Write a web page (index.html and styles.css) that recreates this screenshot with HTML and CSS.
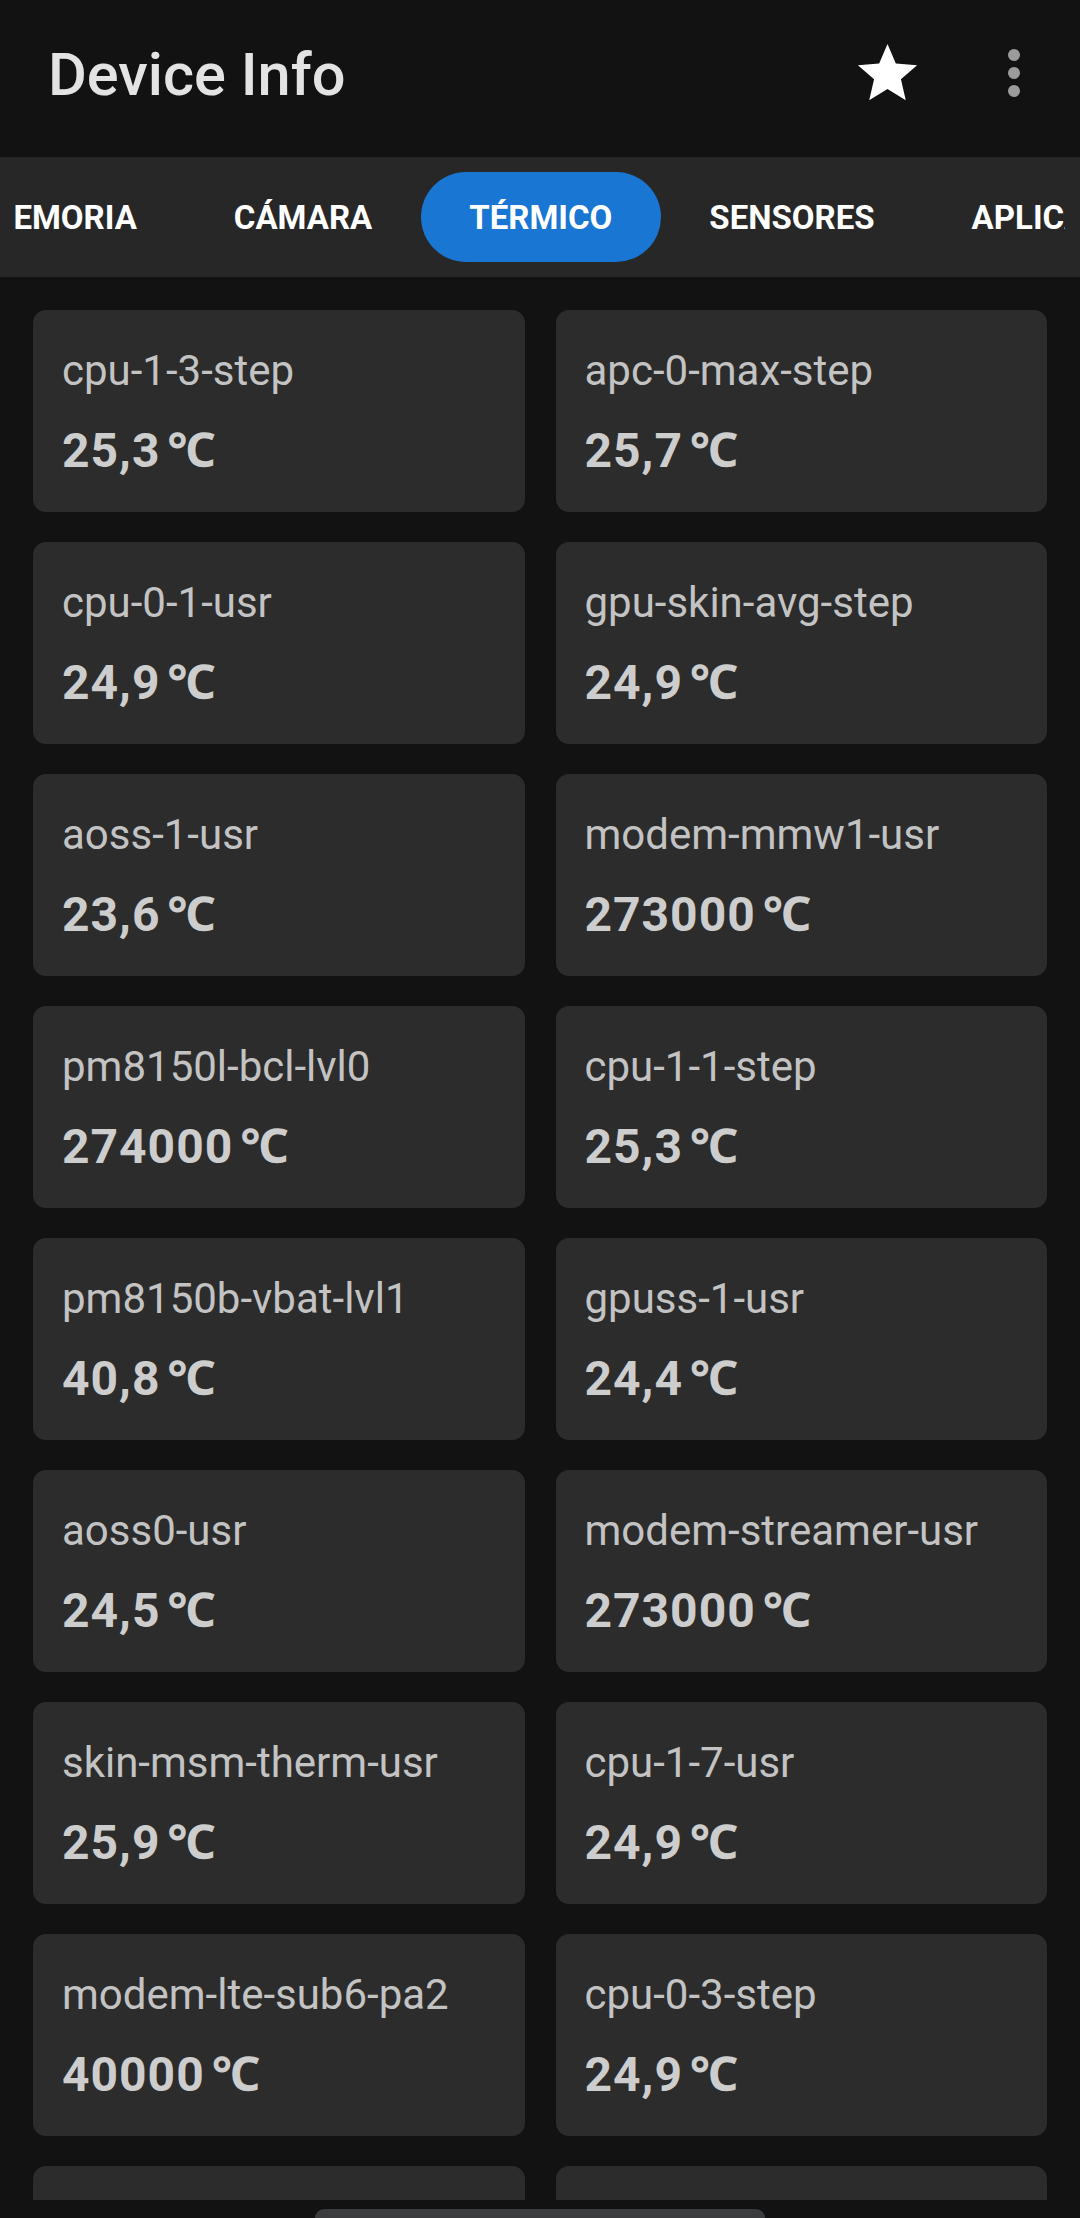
FILE: index.html
```html
<!DOCTYPE html>
<html lang="es">
<head>
<meta charset="utf-8">
<title>Device Info</title>
<link rel="stylesheet" href="styles.css">
</head>
<body>
<div class="screen">
  <header class="toolbar">
    <h1 class="title">Device Info</h1>
    <div class="actions">
      <button class="icon-btn" aria-label="Favorito">
        <svg viewBox="0 0 24 24" class="icon star"><path d="M12 17.27L18.18 21l-1.64-7.03L22 9.24l-7.19-.61L12 2 9.19 8.63 2 9.24l5.46 4.730L5.82 21z"/></svg>
      </button>
      <button class="icon-btn" aria-label="Más opciones">
        <svg viewBox="0 0 24 24" class="icon more"><circle cx="12" cy="6" r="2"/><circle cx="12" cy="12" r="2"/><circle cx="12" cy="18" r="2"/></svg>
      </button>
    </div>
  </header>

  <nav class="tabbar">
    <div class="tab-scroll">
      <div class="tab-row">
        <span class="tab">MEMORIA</span>
        <span class="tab">CÁMARA</span>
        <span class="tab active">TÉRMICO</span>
        <span class="tab">SENSORES</span>
        <span class="tab">APLICACIONES</span>
      </div>
    </div>
  </nav>

  <main class="content">
    <div class="grid">
      <div class="card"><div class="label">cpu-1-3-step</div><div class="value">25,3 ℃</div></div>
      <div class="card"><div class="label">apc-0-max-step</div><div class="value">25,7 ℃</div></div>
      <div class="card"><div class="label">cpu-0-1-usr</div><div class="value">24,9 ℃</div></div>
      <div class="card"><div class="label">gpu-skin-avg-step</div><div class="value">24,9 ℃</div></div>
      <div class="card"><div class="label">aoss-1-usr</div><div class="value">23,6 ℃</div></div>
      <div class="card"><div class="label">modem-mmw1-usr</div><div class="value">273000 ℃</div></div>
      <div class="card"><div class="label">pm8150l-bcl-lvl0</div><div class="value">274000 ℃</div></div>
      <div class="card"><div class="label">cpu-1-1-step</div><div class="value">25,3 ℃</div></div>
      <div class="card"><div class="label">pm8150b-vbat-lvl1</div><div class="value">40,8 ℃</div></div>
      <div class="card"><div class="label">gpuss-1-usr</div><div class="value">24,4 ℃</div></div>
      <div class="card"><div class="label">aoss0-usr</div><div class="value">24,5 ℃</div></div>
      <div class="card"><div class="label">modem-streamer-usr</div><div class="value">273000 ℃</div></div>
      <div class="card"><div class="label">skin-msm-therm-usr</div><div class="value">25,9 ℃</div></div>
      <div class="card"><div class="label">cpu-1-7-usr</div><div class="value">24,9 ℃</div></div>
      <div class="card"><div class="label">modem-lte-sub6-pa2</div><div class="value">40000 ℃</div></div>
      <div class="card"><div class="label">cpu-0-3-step</div><div class="value">24,9 ℃</div></div>
      <div class="card" aria-hidden="true"></div>
      <div class="card" aria-hidden="true"></div>
    </div>
  </main>

  <div class="navbar"><div class="handle"></div></div>
</div>
</body>
</html>
```

FILE: styles.css
```css
* { box-sizing: border-box; }

html, body {
  margin: 0;
  padding: 0;
  background: #121212;
}

body {
  width: 1080px;
  height: 2218px;
  overflow: hidden;
  font-family: Roboto, "Noto Sans", "Liberation Sans", sans-serif;
}

.screen {
  display: flex;
  flex-direction: column;
  height: 2218px;
}

/* Toolbar */
.toolbar {
  height: 157px;
  flex: none;
  display: flex;
  align-items: flex-start;
  justify-content: space-between;
  padding: 37px 30px 0 48px;
}

.title {
  margin: 0;
  padding-top: 3px;
  font-size: 59.5px;
  line-height: 70px;
  font-weight: 500;
  color: #e3e3e3;
  letter-spacing: 0;
}

.actions {
  display: flex;
  align-items: center;
  gap: 55px;
}

.icon-btn {
  width: 72px;
  height: 72px;
  padding: 0;
  border: 0;
  background: none;
  display: flex;
  align-items: center;
  justify-content: center;
}

.icon { width: 72px; height: 72px; display: block; }
.star { fill: #ffffff; width: 71px; height: 71px; }
.more { fill: #9c9c9c; }

/* Tabs */
.tabbar {
  height: 120px;
  flex: none;
  background: #272727;
  display: flex;
  align-items: center;
  padding: 0 15px;
}

.tab-scroll {
  width: 1050px;
  overflow: hidden;
}

.tab-row {
  display: flex;
  align-items: center;
  margin-left: -79px;
  white-space: nowrap;
}

.tab {
  flex: none;
  height: 90px;
  padding: 0 48.5px;
  border-radius: 45px;
  display: flex;
  align-items: center;
  font-size: 33px;
  font-weight: 700;
  color: #ffffff;
}

.tab.active {
  background: #1976d2;
}

/* Content */
.content {
  flex: 1;
  overflow: hidden;
  padding: 33px 33px 0;
}

.grid {
  display: grid;
  grid-template-columns: 1fr 1fr;
  column-gap: 31px;
  row-gap: 30px;
}

.card {
  height: 202px;
  background: #2c2c2c;
  border-radius: 13px;
  padding: 36px 29px 0;
}

.label {
  font-size: 42px;
  line-height: 49px;
  color: #c3c3c3;
  white-space: nowrap;
}

.value {
  margin-top: 28px;
  font-size: 48px;
  line-height: 55px;
  font-weight: 700;
  letter-spacing: 1px;
  word-spacing: -6px;
  color: #cdcdcd;
  white-space: nowrap;
}

/* Navigation bar */
.navbar {
  height: 18px;
  flex: none;
  display: flex;
  justify-content: center;
  align-items: flex-start;
  padding-top: 9px;
  overflow: hidden;
}

.handle {
  width: 450px;
  height: 18px;
  border-radius: 9px;
  background: #3b3c3e;
  flex: none;
}
```
